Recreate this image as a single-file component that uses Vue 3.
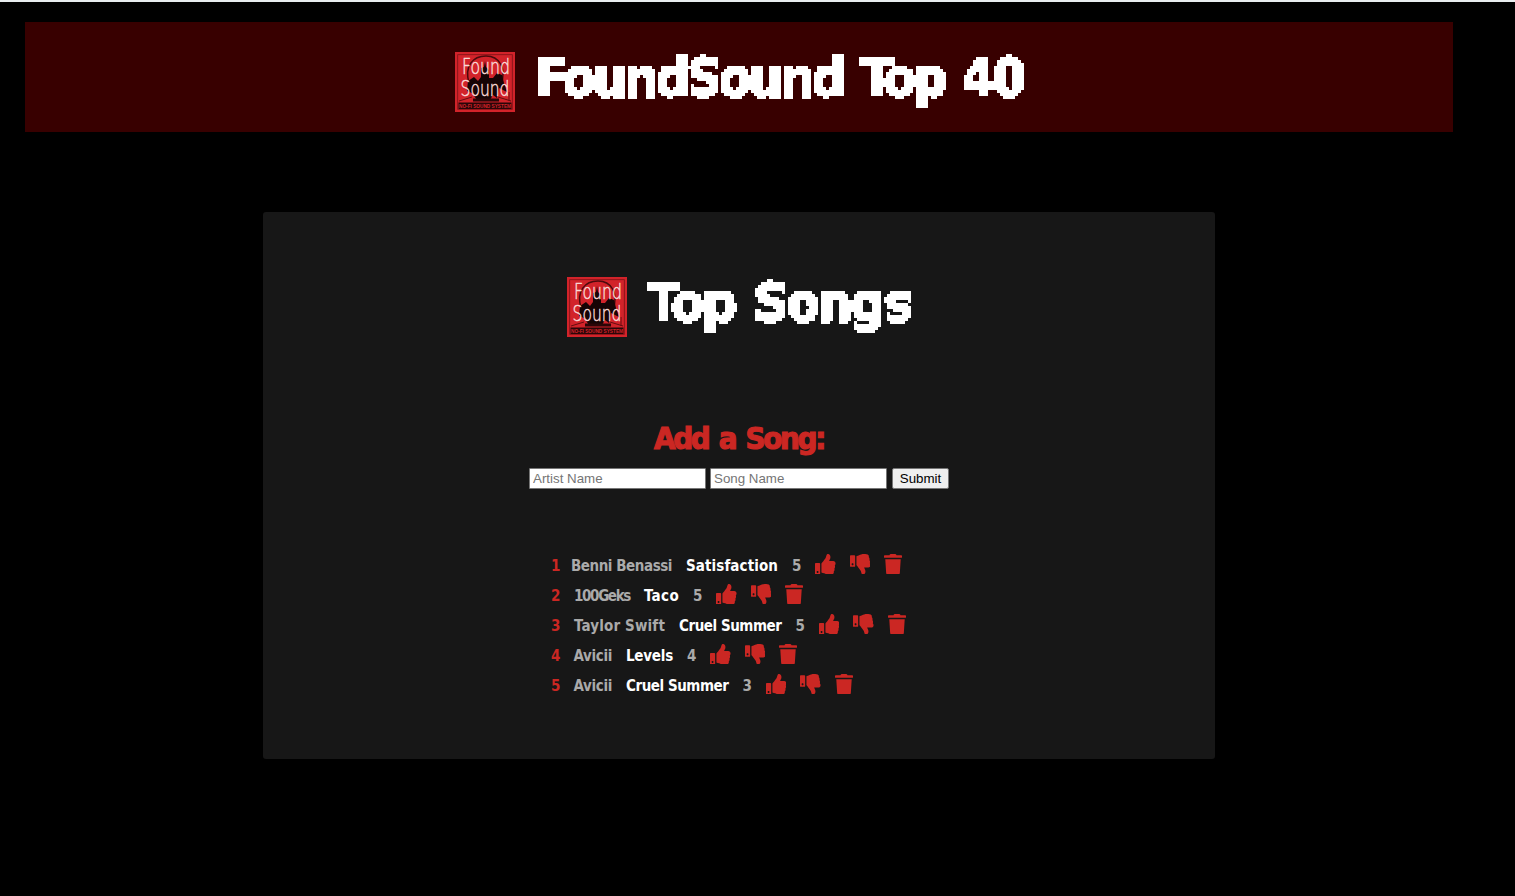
<script setup>
import { h } from 'vue'

// Spreads a text evenly over the given width
const vFit = {
  mounted(el, { value }) {
    const range = document.createRange()
    range.selectNodeContents(el)
    const natural = range.getBoundingClientRect().width
    el.style.letterSpacing = (value - natural) / el.textContent.length + 'px'
  },
}

const songs = [
  { artist: 'Benni Benassi', title: 'Satisfaction', votes: 5, w: [6, 101, 92] },
  { artist: '100Geks', title: 'Taco', votes: 5, w: [9, 56, 35] },
  { artist: 'Taylor Swift', title: 'Cruel Summer', votes: 5, w: [9, 91, 102.5] },
  { artist: 'Avicii', title: 'Levels', votes: 4, w: [8.5, 38.5, 47] },
  { artist: 'Avicii', title: 'Cruel Summer', votes: 3, w: [8.5, 38.5, 102.5] },
]

const icons = [
  { name: 'up', box: '0 0 512 512', d: 'M104 224H24c-13.255 0-24 10.745-24 24v240c0 13.255 10.745 24 24 24h80c13.255 0 24-10.745 24-24V248c0-13.255-10.745-24-24-24zM64 472c-13.255 0-24-10.745-24-24s10.745-24 24-24 24 10.745 24 24-10.745 24-24 24zM384 81.452c0 42.416-25.97 66.208-33.277 94.548h101.723c33.397 0 59.397 27.746 59.553 58.098.084 17.938-7.546 37.249-19.439 49.197l-.11.11c9.836 23.337 8.237 56.037-9.308 79.469 8.681 25.895-.069 57.704-16.382 74.757 4.298 17.598 2.244 32.575-6.148 44.632C440.202 511.587 389.616 512 346.839 512l-2.845-.001c-48.287-.017-87.806-17.598-119.56-31.725-15.957-7.099-36.821-15.887-52.651-16.178-6.54-.12-11.783-5.457-11.783-11.998v-213.77c0-3.2 1.282-6.271 3.558-8.521 39.614-39.144 56.648-80.587 89.117-113.111 14.804-14.832 20.188-37.236 25.393-58.902C282.515 39.293 291.817 0 312 0c24 0 72 8 72 81.452z' },
  { name: 'down', box: '0 0 512 512', d: 'M0 56v240c0 13.255 10.745 24 24 24h80c13.255 0 24-10.745 24-24V56c0-13.255-10.745-24-24-24H24C10.745 32 0 42.745 0 56zm40 200c0-13.255 10.745-24 24-24s24 10.745 24 24-10.745 24-24 24-24-10.745-24-24zm272 256c-20.183 0-29.485-39.293-33.931-57.795-5.206-21.666-10.589-44.07-25.393-58.902-32.469-32.524-49.503-73.967-89.117-113.111a11.98 11.98 0 0 1-3.558-8.521V59.901c0-6.541 5.243-11.878 11.783-11.998 15.831-.29 36.694-9.079 52.651-16.178C256.189 17.598 295.709.017 343.995 0h2.844c42.777 0 93.363.413 113.774 29.737 8.392 12.057 10.446 27.034 6.148 44.632 16.312 17.053 25.063 48.863 16.382 74.757 17.544 23.432 19.143 56.132 9.308 79.469l.11.11c11.893 11.949 19.523 31.259 19.439 49.197-.156 30.352-26.157 58.098-59.553 58.098H350.723C358.03 364.34 384 388.132 384 430.548 384 504 336 512 312 512z' },
  { name: 'trash', box: '0 0 448 512', d: 'M432 32H312l-9.4-18.7A24 24 0 0 0 281.1 0H166.8a23.72 23.72 0 0 0-21.4 13.3L136 32H16A16 16 0 0 0 0 48v32a16 16 0 0 0 16 16h416a16 16 0 0 0 16-16V48a16 16 0 0 0-16-16zM53.2 467a48 48 0 0 0 47.9 45h245.8a48 48 0 0 0 47.9-45L416 128H32z' },
]

const Logo = () =>
  h('svg', { viewBox: '0 0 60 60', width: 60, height: 60, class: 'logo' }, [
    h('rect', { width: 60, height: 60, fill: '#d2232a' }),
    h('rect', { x: 2.7, y: 2.7, width: 54.6, height: 54.6, fill: 'none', stroke: '#7d1216', 'stroke-width': 0.8 }),
    h('path', { d: 'M14 31C9 14 18 4 31 4s21 12 15 28', fill: 'none', stroke: '#4b0a0c', 'stroke-width': 1.5 }),
    h('path', { d: 'M30 9l1 6 3 3v8h4l4-5 5 2 2 8 3 9-8-4-2 10-4-3-3 5H22l-5-7-5-2 1-10 6-4 4 4 3-4v-9l3-1z', fill: '#160405' }),
    h('path', { d: 'M18 46.500h26v3H18zM3.500 50.500h53v6.500h-53z', fill: '#2a0608' }),
    h('path', { d: 'M4 49l13-4M43 45l13 4M54 40v9', fill: 'none', stroke: '#650d10', 'stroke-width': 1 }),
    h('text', { x: 7, y: 22, textLength: 48, lengthAdjust: 'spacingAndGlyphs', class: 'mark' }, 'Found'),
    h('text', { x: 5.5, y: 44, textLength: 49, lengthAdjust: 'spacingAndGlyphs', class: 'mark' }, 'Sound'),
    h('text', { x: 4, y: 56.2, textLength: 52, lengthAdjust: 'spacingAndGlyphs', class: 'tag' }, 'NO-FI SOUND SYSTEM'),
  ])
</script>

<template>
  <div class="page">
    <svg class="defs" width="0" height="0">
      <!-- Samples one pixel per 3px cell and grows it to fill the cell -->
      <filter id="pixels" filterUnits="userSpaceOnUse" x="0" y="0" width="540" height="72" color-interpolation-filters="sRGB">
        <feFlood x="1" y="1" width="1" height="1" flood-color="#000" result="dot" />
        <feOffset in="dot" dx="0" dy="0" x="0" y="0" width="3" height="3" result="cell" />
        <feTile in="cell" result="grid" />
        <feComposite in="SourceGraphic" in2="grid" operator="in" />
        <feMorphology operator="dilate" radius="1" />
        <feComponentTransfer><feFuncA type="discrete" tableValues="0 1" /></feComponentTransfer>
      </filter>
    </svg>
    <header class="banner">
      <Logo />
      <h1 v-fit="488">FoundSound Top 40</h1>
    </header>
    <main class="card">
      <div class="title">
        <Logo />
        <h1 v-fit="264">Top Songs</h1>
      </div>
      <h2><span v-fit="170">Add a Song:</span></h2>
      <form @submit.prevent>
        <input type="text" placeholder="Artist Name" />
        <input type="text" placeholder="Song Name" />
        <button type="submit">Submit</button>
      </form>
      <ul>
        <li v-for="(song, i) in songs" :key="i">
          <span v-fit="song.w[0]" class="rank">{{ i + 1 }}</span>
          <span v-fit="song.w[1]">{{ song.artist }}</span>
          <span v-fit="song.w[2]" class="name">{{ song.title }}</span>
          <span v-fit="9">{{ song.votes }}</span>
          <svg v-for="icon in icons" :key="icon.name" :class="icon.name" :viewBox="icon.box"><path :d="icon.d" /></svg>
        </li>
      </ul>
    </main>
  </div>
</template>

<style>
html, body { background: #000; }
.logo { display: block; flex: none; overflow: visible; }
.logo .mark { font: 200 22px "DejaVu Sans", sans-serif; fill: #fbd9d6; stroke: #fbd9d6; stroke-width: 0.5px; }
.logo .tag { font: 700 6px "Liberation Sans", sans-serif; fill: #d2232a; }
</style>

<style scoped>
.page {
  box-sizing: border-box;
  height: 896px;
  padding: 20px 62px 0 25px;
  border-top: 2px solid #e9edef;
  background: #000;
  font-family: "DejaVu Sans Condensed", "DejaVu Sans", sans-serif;
  overflow: hidden;
}
.defs { position: absolute; }
.banner, .title {
  display: flex;
  justify-content: center;
  gap: 20px;
}
.banner {
  box-sizing: border-box;
  height: 110px;
  padding-top: 30px;
  background: #380000;
}
h1 {
  margin: -7px 0 0;
  height: 66px;
  color: #fff;
  font-size: 53px;
  line-height: 65px;
  font-weight: 700;
  font-stretch: condensed;
  word-spacing: 3px;
  white-space: nowrap;
  -webkit-text-stroke: 2.4px #fff;
  filter: url(#pixels);
}
.card {
  box-sizing: border-box;
  width: 952px;
  height: 547px;
  margin: 80px auto 0;
  padding-top: 65px;
  border-radius: 3px;
  background: #171717;
}
.title { height: 60px; }
h2 {
  margin: 81px 0 0;
  height: 40px;
  color: #cb2723;
  font-size: 31px;
  line-height: 40px;
  font-weight: 700;
  font-stretch: condensed;
  word-spacing: 3px;
  text-align: center;
  white-space: nowrap;
  -webkit-text-stroke: 1.2px #cb2723;
}
form {
  display: flex;
  height: 21px;
  margin: 10px 0 0 266px;
}
input, button {
  box-sizing: border-box;
  height: 21px;
  margin: 0;
  border: 1px solid #767676;
  font: 13.333px "Liberation Sans", Arial, sans-serif;
}
input {
  width: 177px;
  margin-right: 4px;
  padding: 1px 3px;
  background: #fff;
  border-radius: 1px;
}
input + input { margin-right: 5px; }
input::placeholder { color: #757575; }
button {
  width: 57px;
  padding: 0;
  border-radius: 2px;
  background: #efefef;
  color: #000;
}
ul {
  margin: 61px 0 0 288px;
  padding: 0;
  list-style: none;
}
li {
  display: flex;
  align-items: flex-start;
  gap: 14px;
  height: 30px;
  color: #aaa;
  font: 700 15px/32px "DejaVu Sans Condensed", "DejaVu Sans", sans-serif;
  white-space: nowrap;
}
.rank { color: #cb2723; }
.name { color: #fff; }
li svg {
  width: 20.6px;
  height: 20.6px;
  margin-top: 3.6px;
  fill: #cb2723;
}
li .trash { width: 18px; }
</style>
